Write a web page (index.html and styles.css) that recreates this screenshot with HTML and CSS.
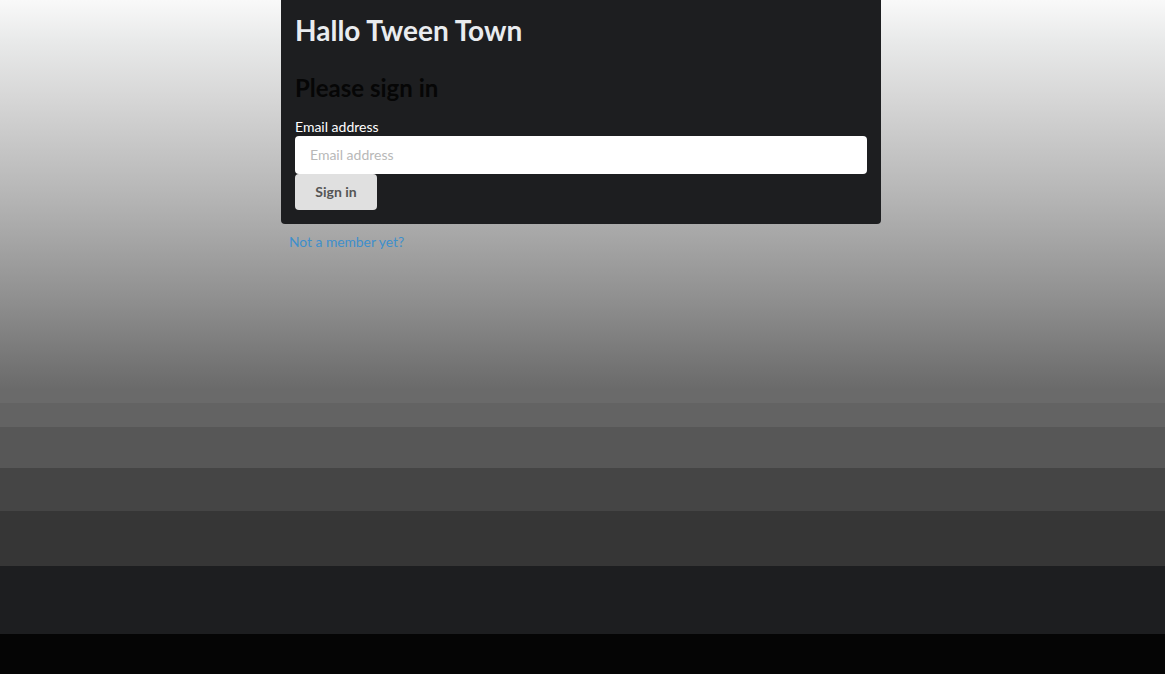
FILE: index.html
```html
<!DOCTYPE html>
<html lang="en">
<head>
<meta charset="utf-8">
<title>Hallo Tween Town</title>
<link rel="stylesheet" href="styles.css">
</head>
<body>
<main class="wrap">
  <section class="card">
    <h1 class="title">Hallo Tween Town</h1>
    <h2 class="subtitle">Please sign in</h2>
    <form class="form">
      <label class="label" for="email">Email address</label>
      <input class="input" id="email" type="email" placeholder="Email address">
      <button class="btn" type="button">Sign in</button>
    </form>
  </section>
  <a class="link" href="#">Not a member yet?</a>
</main>
</body>
</html>
```
FILE: styles.css
```css
html {
  height: 100%;
  background: linear-gradient(to bottom,
    #f9f9f9 0px,
    #e9eaea 40px,
    #d6d6d6 100px,
    #b4b4b4 200px,
    #8f8f8f 300px,
    #6a6a6a 390px,
    #6a6a6a 403px,
    #636363 403px,
    #636363 427px,
    #575757 427px,
    #575757 468px,
    #454545 468px,
    #454545 511px,
    #363636 511px,
    #363636 566px,
    #1d1e20 566px,
    #1d1e20 634px,
    #050505 634px,
    #050505 100%);
  background-repeat: no-repeat;
  min-height: 674px;
}
body {
  margin: 0;
  font-family: Lato, "Liberation Sans", sans-serif;
  font-size: 14px;
  line-height: 1.2;
}
.wrap {
  width: 600px;
  margin-left: calc(50% - 301.5px);
}
.card {
  background: #1d1e20;
  border-radius: 0 0 4px 4px;
  padding: 14px 14px 14px;
}
.title {
  margin: 0;
  font-size: 28px;
  font-weight: 700;
  line-height: 1.2;
  color: #e9ecef;
}
.subtitle {
  margin: 26px 0 0;
  font-size: 24px;
  font-weight: 700;
  line-height: 1.2;
  color: #060606;
}
.form {
  margin-top: 15px;
  display: flex;
  flex-direction: column;
  align-items: flex-start;
}
.label {
  color: #ffffff;
  font-size: 14px;
  line-height: 19px;
}
.input {
  box-sizing: border-box;
  width: 100%;
  height: 38px;
  margin: 0;
  border: none;
  border-radius: 4px;
  background: #fff;
  padding: 0 15px 2px;
  font-family: Lato, "Liberation Sans", sans-serif;
  font-size: 14px;
  color: #333;
  outline: none;
}
.input::placeholder {
  color: #b8b8b8;
}
.btn {
  box-sizing: border-box;
  width: 82px;
  height: 36px;
  border: none;
  border-radius: 4px;
  background: #e0e0e0;
  color: #555;
  font-family: Lato, "Liberation Sans", sans-serif;
  font-size: 14px;
  font-weight: 700;
  padding: 0 0 2px;
  cursor: pointer;
}
.link {
  display: inline-block;
  margin: 10px 0 0 8px;
  color: #3e8fcc;
  text-decoration: none;
  font-size: 13.8px;
}
```
